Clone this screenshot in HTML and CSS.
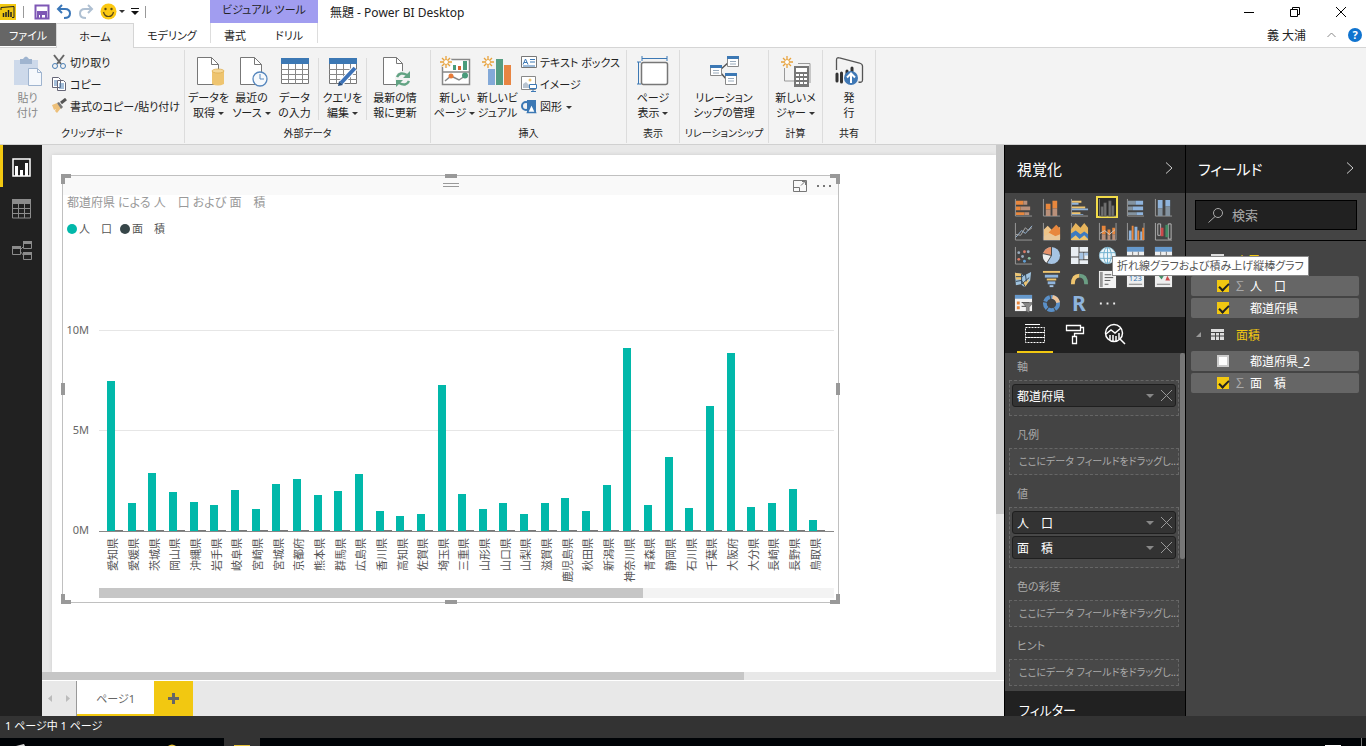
FILE: index.html
```html
<!DOCTYPE html>
<html lang="ja">
<head>
    <meta charset="UTF-8">
    <meta name="viewport" content="width=device-width, initial-scale=1.0">
    <title>無題 - Power BI Desktop</title>
    <link rel="stylesheet" href="styles.css">
</head>
<body>
    <header class="titlebar">
        <div class="quick-access">
            <svg class="logo" width="16" height="16" viewBox="0 0 16 16"><rect width="16" height="16" fill="#f2c811"/><path d="M1 6V3.500l13-1v11h-2" fill="none" stroke="#222"/><path d="M3.500 9v4M6 8v5M8.500 6v7M11 8v5" stroke="#222" stroke-width="1.500"/></svg>
            <span class="divider"></span>
            <button aria-label="保存"><svg width="16" height="16" viewBox="0 0 16 16"><path d="M1.500 1.500h13v13h-13z" fill="#fff" stroke="#7e57b5" stroke-width="2"/><path d="M3 8h10M4 14V10h8v4" stroke="#7e57b5" stroke-width="2" fill="none"/><path d="M6 11h2v3H6z" fill="#7e57b5"/></svg></button>
            <button aria-label="元に戻す"><svg width="16" height="16" viewBox="0 0 16 16"><path d="M6 1L2 5l4 4M2.500 5H9q5 0 5 4.500T8 14" fill="none" stroke="#3a76b8" stroke-width="2"/></svg></button>
            <button aria-label="やり直し"><svg width="16" height="16" viewBox="0 0 16 16"><path d="M10 1l4 4-4 4M13.500 5H7Q2 5 2 9.500T8 14" fill="none" stroke="#afc0d2" stroke-width="2"/></svg></button>
            <button class="smile" aria-label="フィードバック"><svg width="17" height="17" viewBox="0 0 17 17"><circle cx="8.500" cy="8.500" r="8" fill="#fcc912"/><circle cx="5.500" cy="6" r="1.200" fill="#5b4a16"/><circle cx="11.500" cy="6" r="1.200" fill="#5b4a16"/><path d="M3.500 9q1 4.500 5 4.500t5-4.500" fill="none" stroke="#5b4a16" stroke-width="1.200"/></svg><i class="caret"></i></button>
            <button class="customize" aria-label="カスタマイズ"><svg width="8" height="8" viewBox="0 0 8 8"><path d="M0 .500h8" stroke="#111"/><path d="M0 3h8L4 7z" fill="#111"/></svg></button>
            <span class="divider"></span>
        </div>
        <div class="context-title">ビジュアル ツール</div>
        <h1>無題 - Power BI Desktop</h1>
        <div class="window-buttons">
            <button aria-label="最小化"><svg width="12" height="12" viewBox="0 0 12 12"><path d="M1 6.500h10" stroke="#000"/></svg></button>
            <button aria-label="元に戻す (縮小)"><svg width="12" height="12" viewBox="0 0 12 12"><path d="M1.500 3.500h7v7h-7zM3.500 3.500v-2h7v7h-2" fill="none" stroke="#000"/></svg></button>
            <button aria-label="閉じる"><svg width="12" height="12" viewBox="0 0 12 12"><path d="M1 1l10 10M11 1L1 11" stroke="#000"/></svg></button>
        </div>
    </header>

    <nav class="tabs">
        <button class="tab file">ファイル</button>
        <button class="tab home">ホーム</button>
        <button class="tab modeling">モデリング</button>
        <div class="context-tabs">
            <button class="tab">書式</button>
            <button class="tab">ドリル</button>
        </div>
        <div class="account">
            <span>義 大浦</span>
            <button aria-label="リボンを折りたたむ"><svg width="9" height="6" viewBox="0 0 9 6"><path d="M.500 5l4-4 4 4" fill="none" stroke="#888"/></svg></button>
            <button class="help" aria-label="ヘルプ">?</button>
        </div>
    </nav>

    <section class="ribbon">
        <div class="group clipboard">
            <div class="group-items">
                <button class="big disabled">
                    <svg width="32" height="32" viewBox="0 0 32 32"><path d="M2 4h24v25H2z" fill="#cdd9ea"/><path d="M8 3h3q3-5 6 0h3v5H8z" fill="#9fb4cf"/><path d="M16.500 12.500h9l4 4v13h-13z" fill="#f5f8fc" stroke="#9fb4cf"/><path d="M25.500 12.500v4h4" fill="none" stroke="#9fb4cf"/></svg>
                    <span>貼り<br>付け</span>
                </button>
                <div class="stack">
                    <button><svg width="16" height="16" viewBox="0 0 16 16"><path d="M3 1l7 9M13 1L6 10" stroke="#666" stroke-width="2"/><circle cx="4" cy="12" r="2.500" fill="none" stroke="#4a7fb5"/><circle cx="12" cy="12" r="2.500" fill="none" stroke="#4a7fb5"/></svg>切り取り</button>
                    <button><svg width="16" height="16" viewBox="0 0 16 16"><path d="M1.500 1.500h6l2 2v8h-8zM6.500 4.500h6l2 2v8h-8z" fill="#fff" stroke="#667"/><path d="M3 5h3M3 7h3M3 9h3M8 8h5M8 10h5M8 12h5" stroke="#4a7fb5"/></svg>コピー</button>
                    <button><svg width="16" height="16" viewBox="0 0 16 16"><path d="M1 7l5-2 4 5-4 5-2-2 1-2-2 1z" fill="#edc07a"/><path d="M6 5l2-1 4 5-2 2z" fill="#777"/><path d="M10 5l5-4" stroke="#555" stroke-width="3"/></svg>書式のコピー/貼り付け</button>
                </div>
            </div>
            <div class="group-name">クリップボード</div>
        </div>

        <div class="group external">
            <div class="group-items">
                <button class="big">
                    <svg width="32" height="32" viewBox="0 0 32 32"><path d="M4.500 1.500h14l7 7v20h-21z" fill="#fff" stroke="#777"/><path d="M18.500 1.500v7h7" fill="none" stroke="#777"/><path d="M19 15v13q6 3 12 0V15z" fill="#eec46f"/><ellipse cx="25" cy="15" rx="6" ry="2" fill="#f5d797" stroke="#dba947" stroke-width=".7"/></svg>
                    <span>データを<br>取得<i class="caret"></i></span>
                </button>
                <button class="big">
                    <svg width="32" height="32" viewBox="0 0 32 32"><path d="M4.500 1.500h14l7 7v20h-21z" fill="#fff" stroke="#777"/><path d="M18.500 1.500v7h7" fill="none" stroke="#777"/><circle cx="24" cy="23" r="7" fill="#f6f9fc" stroke="#5586bd" stroke-width="1.300"/><path d="M24 18v5h4" fill="none" stroke="#5586bd"/></svg>
                    <span>最近の<br>ソース<i class="caret"></i></span>
                </button>
                <button class="big">
                    <svg width="32" height="32" viewBox="0 0 32 32"><path d="M2.500 3.500h27v24h-27z" fill="#fff" stroke="#777"/><path d="M2 2h28v6H2z" fill="#3c78b4"/><path d="M2 13.500h28M2 18.500h28M2 23.500h28M9.500 8v20M16.500 8v20M23.500 8v20" stroke="#888"/></svg>
                    <span>データ<br>の入力</span>
                </button>
                <i class="rule"></i>
                <button class="big">
                    <svg width="32" height="32" viewBox="0 0 32 32"><path d="M2.500 3.500h27v24h-27z" fill="#fff" stroke="#777"/><path d="M2 2h28v6H2z" fill="#3c78b4"/><path d="M2 13.500h28M2 18.500h28M2 23.500h28M9.500 8v20M16.500 8v20M23.500 8v20" stroke="#888"/><path d="M14 27L28 12" stroke="#fff" stroke-width="6"/><path d="M14 27L28 12" stroke="#3c72b8" stroke-width="4"/><path d="M11 30l1-5 4 4z" fill="#274e80"/></svg>
                    <span>クエリを<br>編集<i class="caret"></i></span>
                </button>
                <i class="rule"></i>
                <button class="big wide">
                    <svg width="32" height="32" viewBox="0 0 32 32"><path d="M4.500 1.500h13l6 6v21h-19z" fill="#fff" stroke="#777"/><path d="M17.500 1.500v6h6" fill="none" stroke="#777"/><circle cx="24" cy="23" r="8" fill="#f3f3f3"/><path d="M18 21q3-6 10-2M30 25q-3 6-10 2" fill="none" stroke="#62a383" stroke-width="2.500"/><path d="M31 15v7h-7zM17 31v-7h7z" fill="#62a383"/></svg>
                    <span>最新の情<br>報に更新</span>
                </button>
            </div>
            <div class="group-name">外部データ</div>
        </div>

        <div class="group insert">
            <div class="group-items">
                <button class="big">
                    <svg width="32" height="32" viewBox="0 0 32 32"><path d="M3.500 3.500h27v25h-27zM3.500 16h27" fill="#fff" stroke="#888" stroke-width="1.500"/><path d="M14 9h3v5h-3z" fill="#4a9b7b"/><path d="M19 10h3v4h-3z" fill="#d9642f"/><path d="M24 5h4v9h-4z" fill="#4a9b7b"/><path d="M6 25l6-5 8 4 6-4" fill="none" stroke="#888" stroke-width="1.500"/><circle cx="12" cy="20" r="2.500" fill="#e87b38"/><circle cx="26" cy="19.500" r="3" fill="#4a9b7b"/><circle cx="7" cy="6" r="6" fill="#f3f3f3"/><path d="M7 0v3M7 9v3M1 6h3M10 6h3M3 2l2 2M9 8l2 2M11 2L9 4M5 8l-2 2" stroke="#e8a33d" stroke-width="1.300"/><circle cx="7" cy="6" r="2.500" fill="#fff" stroke="#e8a33d"/></svg>
                    <span>新しい<br>ページ<i class="caret"></i></span>
                </button>
                <button class="big">
                    <svg width="32" height="32" viewBox="0 0 32 32"><path d="M6 13h7v16H6z" fill="#83a9d8"/><path d="M14 3h7v26h-7z" fill="#559d82"/><path d="M22 9h7v20h-7z" fill="#e88542"/><path d="M6 0v3M6 9v3M0 6h3M9 6h3M2 2l2 2M8 8l2 2M10 2L8 4M4 8l-2 2" stroke="#e8a33d" stroke-width="1.300"/><circle cx="6" cy="6" r="2.500" fill="#fff" stroke="#e8a33d"/></svg>
                    <span>新しいビ<br>ジュアル</span>
                </button>
                <div class="stack">
                    <button><svg width="16" height="16" viewBox="0 0 16 16"><path d="M.500 2.500h15v11H.500z" fill="#fff" stroke="#777"/><path d="M2 10.500L4.500 5 7 10.500M3 8.500h3M9 5.500h5M9 8h5M2 12h12" fill="none" stroke="#3c78b4"/></svg>テキスト ボックス</button>
                    <button><svg width="16" height="16" viewBox="0 0 16 16"><path d="M.500.500h14v13H.500z" fill="#fff" stroke="#888"/><circle cx="9" cy="4" r="1.500" fill="#eec46f"/><path d="M2 12V8l3-2 3 3v3z" fill="#b9c4d0"/><path d="M8.500 8.500h7v4h-7zM12 13v2M10 15.500h5" fill="#fff" stroke="#3c78b4"/></svg>イメージ</button>
                    <button><svg width="16" height="16" viewBox="0 0 16 16"><circle cx="5" cy="8" r="4" fill="none" stroke="#3c78b4" stroke-width="2"/><path d="M6 2h9v12H6z" fill="#3c78b4"/><path d="M10.500 6l4 8.500h-8z" fill="#fff" stroke="#3c78b4" stroke-width="1.500"/></svg><span>図形<i class="caret"></i></span></button>
                </div>
            </div>
            <div class="group-name">挿入</div>
        </div>

        <div class="group view">
            <div class="group-items">
                <button class="big">
                    <svg width="32" height="32" viewBox="0 0 32 32"><rect x="4.500" y="6.500" width="26" height="22" rx="2" fill="#fff" stroke="#777" stroke-width="1.500"/><path d="M5 2.500h25M5 0v5M30 0v5M1.500 6v22M0 6h4M0 28h4" stroke="#3c78b4"/></svg>
                    <span>ページ<br>表示<i class="caret"></i></span>
                </button>
            </div>
            <div class="group-name">表示</div>
        </div>

        <div class="group relation">
            <div class="group-items">
                <button class="big full">
                    <svg width="32" height="32" viewBox="0 0 32 32"><path d="M12 14l9-8M12 16l7 8" stroke="#555" stroke-width="1.500"/><path d="M2.500 10.500h11v9h-11zM19.500 1.500h11v9h-11zM17.500 18.500h11v10h-11z" fill="#fff" stroke="#888"/><path d="M2 9h12v3H2zM19 0h12v3H19zM17 17h12v3H17z" fill="#3c78b4"/><path d="M5 14.500h6M5 17h6M22 5.500h6M22 8h6M20 22.500h6M20 25h6" stroke="#9ab"/></svg>
                    <span>リレーション<br>シップの管理</span>
                </button>
            </div>
            <div class="group-name">リレーションシップ</div>
        </div>

        <div class="group calc">
            <div class="group-items">
                <button class="big">
                    <svg width="32" height="32" viewBox="0 0 32 32"><path d="M4.500 12v13H14M18 7.500h12V27" fill="none" stroke="#999"/><path d="M14 10h15v21H14z" fill="#777"/><path d="M16 12h11v4H16z" fill="#fff"/><path d="M16 19h3M20 19h3M24 19h3M16 23h3M20 23h3M24 23h3M16 27h3M20 27h3M24 27h3" stroke="#fff" stroke-width="2"/><path d="M7 0v3M7 9v3M1 6h3M10 6h3M3 2l2 2M9 8l2 2M11 2L9 4M5 8l-2 2" stroke="#e8a33d" stroke-width="1.300"/><circle cx="7" cy="6" r="2.500" fill="#fff" stroke="#e8a33d"/></svg>
                    <span>新しいメ<br>ジャー<i class="caret"></i></span>
                </button>
            </div>
            <div class="group-name">計算</div>
        </div>

        <div class="group share">
            <div class="group-items">
                <button class="big">
                    <svg width="32" height="32" viewBox="0 0 32 32"><path d="M3.500 14V4q0-3 3-2l20 5q3 1 3 3v14q0 3-4 2" fill="none" stroke="#555" stroke-width="1.300"/><path d="M4 18v7M8.500 17v9M14 15v5M19 12v3" stroke="#333" stroke-width="3" stroke-linecap="round"/><circle cx="18" cy="22" r="7" fill="#3f78b5"/><path d="M18 27v-9M14 21.500l4-4 4 4" fill="none" stroke="#fff" stroke-width="2"/></svg>
                    <span>発<br>行</span>
                </button>
            </div>
            <div class="group-name">共有</div>
        </div>
    </section>

    <main class="workspace">
        <nav class="view-nav">
            <button class="active" aria-label="レポート"><svg width="19" height="19" viewBox="0 0 19 19"><path d="M1 1h17v17H1z" fill="none" stroke="#fff" stroke-width="1.500"/><path d="M4.500 18V8M9.500 18v-6M14.500 18V5" stroke="#fff" stroke-width="3"/></svg></button>
            <button aria-label="データ"><svg width="19" height="20" viewBox="0 0 19 20"><path d="M0 0h19v5H0z" fill="#8c8c8c"/><path d="M.500 4v15h18V4M0 9.500h19M0 14.500h19M6.500 4v15M12.500 4v15" fill="none" stroke="#8c8c8c"/></svg></button>
            <button aria-label="リレーションシップ"><svg width="20" height="20" viewBox="0 0 20 20"><path d="M.500 6.500h8v7h-8zM11.500 1.500h8v6h-8zM11.500 12.500h8v6h-8zM8 9l4-4M8 10l4 5" fill="none" stroke="#8c8c8c"/><path d="M0 5h9v3H0zM11 0h9v3h-9zM11 11h9v3h-9z" fill="#8c8c8c"/></svg></button>
        </nav>

        <section class="report">
            <div class="canvas-area">
                <div class="page">
                    <article class="visual">
                        <i class="handle corner tl"></i><i class="handle corner tr"></i><i class="handle corner bl"></i><i class="handle corner br"></i>
                        <i class="handle side top"></i><i class="handle side bottom"></i><i class="handle side left"></i><i class="handle side right"></i>
                        <div class="visual-bar">
                            <i class="grip"></i>
                            <button aria-label="フォーカス モード"><svg width="14" height="12" viewBox="0 0 14 12"><path d="M.500.500h13v11H.500zM.500 7.500h6v4M8 5.500l4-4M9 1.500h3.500V5" fill="none" stroke="#777"/></svg></button>
                            <button aria-label="その他のオプション"><svg width="14" height="4" viewBox="0 0 14 4"><path d="M0 1h2v2H0zM6 1h2v2H6zM12 1h2v2h-2z" fill="#777"/></svg></button>
                        </div>
                        <h2>都道府県 による 人　口 および 面　積</h2>
                        <div class="legend">
                            <span><i class="dot people"></i>人　口</span>
                            <span><i class="dot area"></i>面　積</span>
                        </div>
                        <div class="chart">
                            <div class="y-axis"><span>10M</span><span>5M</span><span>0M</span></div>
                            <div class="chart-body">
                                <div class="plot" id="plot"></div>
                                <div class="x-axis" id="xAxis"></div>
                                <div class="chart-scroll"><i></i></div>
                            </div>
                        </div>
                    </article>
                </div>
                <div class="scroll-y"><i></i></div>
            </div>
            <div class="scroll-x"><i></i></div>
            <div class="page-tabs">
                <div class="page-arrows">
                    <button aria-label="前のページ"><svg width="4" height="7" viewBox="0 0 4 7"><path d="M4 0v7L0 3.500z" fill="#bbb"/></svg></button>
                    <button aria-label="次のページ"><svg width="4" height="7" viewBox="0 0 4 7"><path d="M0 0v7l4-3.500z" fill="#bbb"/></svg></button>
                </div>
                <button class="page-tab">ページ1</button>
                <button class="add-page" aria-label="新しいページ"><svg width="11" height="11" viewBox="0 0 11 11"><path d="M5.500 0v11M0 5.500h11" stroke="#666" stroke-width="3"/></svg></button>
            </div>
        </section>

        <aside class="pane viz-pane">
            <header>
                <h2>視覚化</h2>
                <button aria-label="折りたたむ"><svg width="8" height="12" viewBox="0 0 8 12"><path d="M1 .500L7 6l-6 5.500" fill="none" stroke="#ccc"/></svg></button>
            </header>
            <div class="viz-grid">
                <button aria-label="積み上げ横棒"><svg viewBox="0 0 20 20"><path d="M1.500 1v18H19" fill="none" stroke="#999"/><path d="M2 3h8v4H2zM2 9h5v4H2zM2 15h9v3H2z" fill="#e8873d"/><path d="M10 3h4v4h-4zM7 9h10v4H7zM11 15h5v3h-5z" fill="#b9907a"/></svg></button>
                <button aria-label="積み上げ縦棒"><svg viewBox="0 0 20 20"><path d="M1.500 1v18H19" fill="none" stroke="#999"/><path d="M4 6h5v6H4zM11 3h5v8h-5z" fill="#e8873d"/><path d="M4 12h5v7H4zM11 11h5v8h-5z" fill="#b9907a"/></svg></button>
                <button aria-label="集合横棒"><svg viewBox="0 0 20 20"><path d="M1.500 1v18H19" fill="none" stroke="#999"/><path d="M2 3h10v2H2zM2 9h14v2H2zM2 15h9v2H2z" fill="#eec46f"/><path d="M2 5h7v2H2zM2 11h17v2H2zM2 17h12v1H2z" fill="#8fb4dd"/></svg></button>
                <button class="selected" aria-label="集合縦棒"><svg viewBox="0 0 20 20"><path d="M1.500 1v18H19" fill="none" stroke="#777"/><path d="M3 9h3v10H3zM6 5h3v14H6zM11 3h3v16h-3zM14 8h3v11h-3z" fill="#707070" stroke="#444" stroke-width=".5"/></svg></button>
                <button aria-label="100% 横棒"><svg viewBox="0 0 20 20"><path d="M1.500 1v18H19" fill="none" stroke="#999"/><path d="M2 3h8v4H2zM2 9h5v4H2zM2 15h9v3H2z" fill="#83929f"/><path d="M10 3h8v4h-8zM7 9h11v4H7zM11 15h7v3h-7z" fill="#8fb4dd"/></svg></button>
                <button aria-label="100% 縦棒"><svg viewBox="0 0 20 20"><path d="M1.500 1v18H19" fill="none" stroke="#999"/><path d="M4 2h5v9H4zM12 2h5v7h-5z" fill="#8fb4dd"/><path d="M4 11h5v8H4zM12 9h5v10h-5z" fill="#83929f"/></svg></button>

                <button aria-label="折れ線"><svg viewBox="0 0 20 20"><path d="M1.500 1v18H19" fill="none" stroke="#999"/><path d="M2 16l6-7 4 3 7-8" fill="none" stroke="#9bb8d8"/><path d="M2 13l5 1 5-8 3 3 4-3" fill="none" stroke="#aaa"/></svg></button>
                <button aria-label="面"><svg viewBox="0 0 20 20"><path d="M1.500 1v18H19" fill="none" stroke="#999"/><path d="M2 8l4-4 7 7 6-6v13H2z" fill="#eec488"/><path d="M7 11l8-8 4 4v11z" fill="#e8873d"/><path d="M2 15l6-3 6 3 5-2v6H2z" fill="#e9c798"/></svg></button>
                <button aria-label="積み上げ面"><svg viewBox="0 0 20 20"><path d="M1.500 1v18H19" fill="none" stroke="#999"/><path d="M1 8l5-7 5 5 4-5 4 5v12H1z" fill="#e8b55c"/><path d="M1 12l5-3 5 4 4-3 4 3v6H1z" fill="#3d7ac0"/><path d="M1 18l5-4 4 4 5-4 4 4v1H1z" fill="#eec46f"/></svg></button>
                <button aria-label="折れ線および積み上げ縦棒"><svg viewBox="0 0 20 20"><path d="M1.500 1v18H19V1" fill="none" stroke="#999"/><path d="M4 4h4v9H4zM10 8h3v6h-3zM15 6h3v7h-3z" fill="#e8873d"/><path d="M4 13h4v6H4zM10 14h3v5h-3zM15 13h3v6h-3z" fill="#b9907a"/><path d="M2 12l5-3 5 4 6-5" fill="none" stroke="#ccc"/></svg></button>
                <button aria-label="折れ線および集合縦棒"><svg viewBox="0 0 20 20"><path d="M1.500 1v18H19V1" fill="none" stroke="#999"/><path d="M3 9h3v10H3zM9 5h3v14H9zM15 10h2v9h-2z" fill="#8fb4dd"/><path d="M6 4h2v15H6zM12 9h2v10h-2zM17 6h2v13h-2z" fill="#e8873d"/></svg></button>
                <button aria-label="ウォーターフォール"><svg viewBox="0 0 20 20"><path d="M1.500 1v18H19" fill="none" stroke="#aaa"/><path d="M4 2h3v12H4zM15 2h3v16h-3z" fill="none" stroke="#bbb"/><path d="M7 6h3v9H7z" fill="#ca4a4a"/><path d="M12 3h3v13h-3z" fill="#438c65"/></svg></button>

                <button aria-label="散布図"><svg viewBox="0 0 20 20"><path d="M1.500 1v18H19" fill="none" stroke="#999"/><g fill="#9aabbc"><circle cx="5" cy="7" r="1.500"/><circle cx="15" cy="6" r="1.500"/><circle cx="9" cy="11" r="1.500"/></g><g fill="#dd7c67"><circle cx="5" cy="14" r="1.500"/><circle cx="11" cy="6" r="1.500"/></g><circle cx="16" cy="13" r="1.500" fill="#8ab99f"/><circle cx="11" cy="16" r="1.500" fill="#62a0d6"/></svg></button>
                <button aria-label="円"><svg viewBox="0 0 20 20"><circle cx="10" cy="10" r="9" fill="#a6c4e4"/><path d="M10 10V1q-6 0-9 7z" fill="#e7926a"/><path d="M10 10L1 8q-1 6 4 10z" fill="#eee"/><path d="M10 1v9L1 8M10 10l-5 8" fill="none" stroke="#444"/></svg></button>
                <button aria-label="ツリーマップ"><svg viewBox="0 0 20 20"><path d="M1 1h8v10H1zM10 1h9v5h-9zM10 7h4v7h-4zM15 7h4v7h-4zM1 12h8v7H1zM10 15h9v4h-9z" fill="#e9eef3"/><path d="M10 7h4v7h-4zM15 7h4v3h-4z" fill="#a6c4e4"/></svg></button>
                <button aria-label="マップ"><svg viewBox="0 0 20 20"><circle cx="10" cy="10" r="8.500" fill="#eef6fa" stroke="#9cc8dc"/><ellipse cx="10" cy="10" rx="4" ry="8.500" fill="none" stroke="#6fb0cf"/><path d="M2 7h16M2 13h16M10 2v16" stroke="#6fb0cf"/></svg></button>
                <button aria-label="テーブル"><svg viewBox="0 0 20 20"><path d="M1 1h18v18H1z" fill="#eee"/><path d="M1 1h18v5H1z" fill="#6699cc"/><path d="M1 10h18M1 14h18M7 6v13M13 6v13" stroke="#777"/></svg></button>
                <button aria-label="マトリックス"><svg viewBox="0 0 20 20"><path d="M1 1h18v18H1z" fill="#eee"/><path d="M1 1h18v5H1z" fill="#6699cc"/><path d="M1 10h18M1 14h18M7 6v13M13 6v13" stroke="#777"/></svg></button>

                <button aria-label="塗り分け地図"><svg viewBox="0 0 20 20"><path d="M1 3l7 1 2 2 8-4-1 9-6 7-4-3-5 1z" fill="#9fc3df"/><path d="M1 3l7 1v6H2zM9 13l7-3-4 8z" fill="#eec46f"/><path d="M2 7h7l3-3 1 8M2 12l6-1 4 7M8 4v11l8-7" fill="none" stroke="#345"/></svg></button>
                <button aria-label="じょうご"><svg viewBox="0 0 20 20"><path d="M1 1h18v2H1z" fill="#eec46f"/><path d="M3 5h14v3H3z" fill="#8fb4dd"/><path d="M5 9h10v2H5z" fill="#eec46f"/><path d="M6 12h8v3H6z" fill="#8fb4dd"/><path d="M8 16h4v2H8z" fill="#a6c4e4"/></svg></button>
                <button aria-label="ゲージ"><svg viewBox="0 0 20 20"><path d="M3 15q0-9 7-9" fill="none" stroke="#eec46f" stroke-width="4"/><path d="M10 6q7 0 7 9" fill="none" stroke="#6b9e84" stroke-width="4"/></svg></button>
                <button aria-label="カード"><svg viewBox="0 0 20 20"><path d="M1 1h18v18H1z" fill="#f2f2f2"/><path d="M2 2h3v16H2z" fill="#999"/><path d="M7 5h7M7 8h9M7 11h6M7 15h4" stroke="#555"/></svg></button>
                <button aria-label="複数の行のカード"><svg viewBox="0 0 20 20"><path d="M1 1h18v17H1z" fill="#eee"/><path d="M3 15h14" stroke="#777"/><text x="3" y="12" font-size="8" fill="#3c78b4">123</text></svg></button>
                <button aria-label="KPI"><svg viewBox="0 0 20 20"><path d="M1 1h18v17H1z" fill="#eee"/><path d="M4 5h7l-3 5z" fill="#438c65"/><path d="M12 11h5l-3-5z" fill="#ca4a4a"/><path d="M3 15h14" stroke="#777"/></svg></button>

                <button aria-label="スライサー"><svg viewBox="0 0 20 20"><path d="M1 1h18v17H1z" fill="#f2f2f2"/><path d="M1 1h18v4H1z" fill="#6699cc"/><path d="M3 8h3v3H3zM3 13h3v3H3z" fill="#e8873d"/><path d="M8 9h8M8 13h5" stroke="#444"/><path d="M9 9h11l-4 5v6l-3-2v-4z" fill="#888" stroke="#444" stroke-width=".5"/></svg></button>
                <button aria-label="ドーナツ"><svg viewBox="0 0 20 20"><circle cx="10" cy="10" r="7" fill="none" stroke="#5a90c8" stroke-width="4" stroke-dasharray="7 1"/><path d="M11 3q5 1 6 6" fill="none" stroke="#eec49a" stroke-width="4"/></svg></button>
                <button class="r-script" aria-label="R スクリプト">R</button>
                <button aria-label="その他"><svg viewBox="0 0 20 20"><path d="M2 9h2v2H2zM9 9h2v2H9zM16 9h2v2h-2z" fill="#eee"/></svg></button>
            </div>
            <div class="pane-tabs">
                <button class="active" aria-label="フィールド"><svg width="22" height="22" viewBox="0 0 22 22"><path d="M1 1.500h15" stroke="#fff"/><path d="M1.500 4.500h19v5h-19zM1.500 9.500h19v5h-19zM1.500 14.500h19v5h-19z" fill="none" stroke="#fff" stroke-dasharray="2 1"/></svg></button>
                <button aria-label="書式"><svg width="20" height="22" viewBox="0 0 20 22"><path d="M1.500 2.500h14v5h-14zM15.500 4.500h3v6h-9v3M7.500 13.500h4v7h-4z" fill="none" stroke="#fff" stroke-width="1.300"/></svg></button>
                <button aria-label="分析"><svg width="22" height="22" viewBox="0 0 22 22"><circle cx="10" cy="10" r="8.500" fill="none" stroke="#fff" stroke-width="1.500"/><path d="M2 11l5-4 4 3 6-5M6 17v-5M9 18v-6M12 18v-5M15 16v-6M16 16l5 5" fill="none" stroke="#fff" stroke-width="1.500"/></svg></button>
            </div>
            <div class="wells">
                <div class="well-list">
                    <h3>軸</h3>
                    <div class="well">
                        <div class="pill"><span>都道府県</span><button class="caret" aria-label="メニュー"></button><button class="remove" aria-label="削除"></button></div>
                    </div>
                    <h3>凡例</h3>
                    <div class="well empty">ここにデータ フィールドをドラッグし...</div>
                    <h3>値</h3>
                    <div class="well">
                        <div class="pill"><span>人　口</span><button class="caret" aria-label="メニュー"></button><button class="remove" aria-label="削除"></button></div>
                        <div class="pill"><span>面　積</span><button class="caret" aria-label="メニュー"></button><button class="remove" aria-label="削除"></button></div>
                    </div>
                    <h3>色の彩度</h3>
                    <div class="well empty">ここにデータ フィールドをドラッグし...</div>
                    <h3>ヒント</h3>
                    <div class="well empty">ここにデータ フィールドをドラッグし...</div>
                </div>
                <div class="wells-scroll"><i></i></div>
            </div>
            <div class="filter-head">フィルター</div>
            <div class="tooltip">折れ線グラフおよび積み上げ縦棒グラフ</div>
        </aside>

        <aside class="pane fields-pane">
            <header>
                <h2>フィールド</h2>
                <button aria-label="折りたたむ"><svg width="8" height="12" viewBox="0 0 8 12"><path d="M1 .500L7 6l-6 5.500" fill="none" stroke="#ccc"/></svg></button>
            </header>
            <div class="search">
                <label for="fieldSearch"><svg width="16" height="16" viewBox="0 0 16 16"><circle cx="10" cy="6" r="4.500" fill="none" stroke="#aaa"/><path d="M7 9.500L.500 15.500" stroke="#aaa"/></svg></label>
                <input type="text" id="fieldSearch" placeholder="検索" aria-label="検索">
            </div>
            <div class="field-list">
                <div class="table-row">
                    <i class="expander"></i>
                    <svg width="13" height="11" viewBox="0 0 13 11"><path d="M0 0h13v11H0z" fill="#ddd"/><path d="M0 3.500h13M0 7h13M4.500 3v8M8.500 3v8" stroke="#444"/></svg>
                    <span>人口</span>
                </div>
                <label class="field"><input type="checkbox" checked><i class="sigma">∑</i><span>人　口</span></label>
                <label class="field"><input type="checkbox" checked><i class="sigma"></i><span>都道府県</span></label>
                <div class="table-row">
                    <i class="expander"></i>
                    <svg width="13" height="11" viewBox="0 0 13 11"><path d="M0 0h13v11H0z" fill="#ddd"/><path d="M0 3.500h13M0 7h13M4.500 3v8M8.500 3v8" stroke="#444"/></svg>
                    <span>面積</span>
                </div>
                <label class="field"><input type="checkbox"><i class="sigma"></i><span>都道府県_2</span></label>
                <label class="field"><input type="checkbox" checked><i class="sigma">∑</i><span>面　積</span></label>
            </div>
        </aside>
    </main>

    <footer class="status">1 ページ中 1 ページ</footer>
    <div class="taskbar">
        <svg width="340" height="8" viewBox="0 0 340 8"><path d="M16 8l8-2 1 2z" fill="#ddd"/><path d="M168 8q4-3 8 0z" fill="#e8c33a"/><path d="M224 0h36v8h-36z" fill="#333"/><path d="M234 7h16v1h-16z" fill="#e8c33a"/></svg>
        <svg width="44" height="8" viewBox="0 0 44 8"><path d="M3 7h16v1H3z" fill="#fff"/><path d="M39.500 0v8" stroke="#777"/></svg>
    </div>

    <script src="script.js"></script>
</body>
</html>
```
FILE: styles.css
```css
* {
    margin: 0;
    padding: 0;
    box-sizing: border-box;
}

body {
    height: 100vh;
    display: flex;
    flex-direction: column;
    overflow: hidden;
    font-family: "Noto Sans", "Noto Sans CJK JP", sans-serif;
    font-feature-settings: "palt";
    font-size: 11px;
    color: #222;
    background: #fff;
}

button {
    border: none;
    background: none;
    font: inherit;
    font-feature-settings: inherit;
    color: inherit;
    cursor: pointer;
}

svg {
    display: block;
    flex: none;
}

h1, h2, h3 {
    font-weight: 400;
}

.caret {
    display: inline-block;
    border: 3px solid transparent;
    border-top-color: #333;
    border-bottom: none;
    margin-left: 4px;
    vertical-align: 2px;
}

/* title bar */
.titlebar {
    display: flex;
    align-items: center;
    height: 23px;
    flex: none;
}

.quick-access {
    width: 210px;
    display: flex;
    align-items: center;
    gap: 6px;
}

.quick-access .divider {
    width: 1px;
    height: 12px;
    background: #999;
}

.quick-access .divider:nth-of-type(1) {
    margin: 0 4px 0 1px;
}

.smile {
    display: flex;
    align-items: center;
}

.smile .caret {
    margin-left: 2px;
}

.context-title {
    width: 108px;
    height: 23px;
    line-height: 20px;
    text-align: center;
    background: #a19df0;
}

h1 {
    margin-left: 12px;
    font-size: 12px;
}

.window-buttons {
    margin-left: auto;
    display: flex;
    padding-right: 2px;
}

.window-buttons button {
    width: 46px;
    display: flex;
    justify-content: center;
}

/* ribbon tabs */
.tabs {
    display: flex;
    height: 25px;
    flex: none;
    border-bottom: 1px solid #d5d5d5;
}

.tab {
    text-align: center;
}

.tab.file {
    width: 56px;
    height: 23px;
    background: #666;
    color: #fff;
}

.tab.home {
    width: 78px;
    height: 25px;
    background: #f3f3f3;
    border: 1px solid #d5d5d5;
    border-bottom: none;
}

.tab.modeling {
    width: 76px;
}

.context-tabs {
    width: 108px;
    height: 20px;
    padding: 4px 14px 0 13px;
    display: flex;
    align-items: center;
    justify-content: space-between;
    border: solid #ddd;
    border-width: 0 1px;
}

.account {
    margin-left: auto;
    padding-right: 4px;
    display: flex;
    align-items: center;
    gap: 12px;
    font-size: 12px;
}

.account button:first-of-type {
    margin-left: 9px;
}

.help {
    width: 14px;
    height: 14px;
    border-radius: 50%;
    background: #0f73cf;
    color: #fff;
    font-weight: 700;
    font-size: 11px;
    line-height: 14px;
}

/* ribbon */
.ribbon {
    display: flex;
    height: 97px;
    flex: none;
    padding: 2px 0 1px;
    background: #f3f3f3;
    border-bottom: 1px solid #d0d0d0;
}

.group {
    display: flex;
    flex-direction: column;
    flex: none;
    border-right: 1px solid #dcdcdc;
}

.group.clipboard { width: 185px; }
.group.external { width: 246px; }
.group.insert { width: 196px; }
.group.view { width: 53px; }
.group.relation { width: 89px; }
.group.calc { width: 54px; }
.group.share { width: 53px; }

.group-items {
    flex: 1;
    display: flex;
    justify-content: center;
}

.external .group-items {
    justify-content: flex-start;
    padding-left: 2px;
}

.insert .group-items {
    justify-content: flex-start;
    padding-left: 2px;
}

.clipboard .group-items {
    justify-content: flex-start;
    padding-left: 6px;
}

.group-name {
    height: 20px;
    font-size: 10px;
    line-height: 20px;
    text-align: center;
    white-space: nowrap;
}

.big {
    width: 43px;
    padding-top: 6px;
    display: flex;
    flex-direction: column;
    align-items: center;
    justify-content: flex-start;
    line-height: 15px;
    white-space: nowrap;
}

.big.wide {
    width: 52px;
}

.big.full {
    width: 88px;
}

.big span {
    padding-top: 2px;
}

.big .caret {
    margin-left: 3px;
}

.big.disabled {
    color: #888;
}

.rule {
    width: 1px;
    height: 62px;
    margin: 8px 2px 0;
    background: #dcdcdc;
}

.stack {
    display: flex;
    flex-direction: column;
    padding-top: 1px;
    margin-left: 2px;
}

.stack button {
    height: 22px;
    display: flex;
    align-items: center;
    gap: 3px;
    white-space: nowrap;
}

/* workspace */
.workspace {
    flex: 1;
    min-height: 0;
    display: flex;
}

.view-nav {
    width: 42px;
    flex: none;
    background: #212121;
}

.view-nav button {
    width: 42px;
    height: 42px;
    display: flex;
    align-items: center;
    justify-content: center;
    border-left: 3px solid transparent;
    padding: 2px 2px 0 0;
}

.view-nav .active {
    border-left-color: #f2c811;
}

.report {
    flex: 1;
    min-width: 0;
    display: flex;
    flex-direction: column;
    background: #e8e8e8;
}

.canvas-area {
    flex: 1;
    min-height: 0;
    display: flex;
}

.page {
    flex: 1;
    margin: 10px 0 0 10px;
    padding: 20px 157px 69px 10px;
    display: flex;
    background: #fff;
    box-shadow: 0 0 4px #ccc;
}

.scroll-y {
    width: 8px;
    z-index: 1;
    background: #e8e8e8;
}

.scroll-y i {
    display: block;
    height: 70%;
    background: #c8c8c8;
}

.scroll-x {
    height: 9px;
    z-index: 1;
    background: #e8e8e8;
    border-bottom: 1px solid #fff;
}

.scroll-x i {
    display: block;
    width: 73%;
    height: 8px;
    background: #c6c6c6;
}

.page-tabs {
    height: 35px;
    display: flex;
}

.page-arrows {
    width: 35px;
    padding: 0 6px;
    display: flex;
    align-items: center;
    justify-content: space-between;
    border-right: 1px solid #999;
}

.page-tab {
    width: 77px;
    background: #fff;
    border-bottom: 2px solid #f2c811;
    color: #666;
}

.add-page {
    width: 39px;
    display: flex;
    align-items: center;
    justify-content: center;
    background: #f2c811;
}

/* selected visual */
.visual {
    position: relative;
    flex: 1;
    display: flex;
    flex-direction: column;
    border: 1px solid #c0c0c0;
}

.handle {
    position: absolute;
    border: 0 solid #999;
}

.corner {
    width: 10px;
    height: 10px;
}

.tl { top: -2px; left: -2px; border-width: 4px 0 0 4px; }
.tr { top: -2px; right: -2px; border-width: 4px 4px 0 0; }
.bl { bottom: -2px; left: -2px; border-width: 0 0 4px 4px; }
.br { bottom: -2px; right: -2px; border-width: 0 4px 4px 0; }

.side {
    background: #999;
}

.side.top, .side.bottom {
    left: calc(50% - 6px);
    width: 12px;
    height: 4px;
}

.side.left, .side.right {
    top: calc(50% - 6px);
    width: 4px;
    height: 12px;
}

.side.top { top: -2px; }
.side.bottom { bottom: -2px; }
.side.left { left: -2px; }
.side.right { right: -2px; }

.visual-bar {
    height: 19px;
    padding: 0 7px 0 6px;
    display: flex;
    align-items: center;
    justify-content: flex-end;
    gap: 10px;
    background: #f9f9f9;
}

.grip {
    position: absolute;
    left: calc(50% - 8px);
    top: 7px;
    width: 16px;
    height: 4px;
    border: solid #999;
    border-width: 1px 0;
}

.visual h2 {
    padding-left: 4px;
    line-height: 16px;
    font-size: 12px;
    color: #999;
}

.legend {
    display: flex;
    gap: 8px;
    padding: 10px 0 0 4px;
    line-height: 16px;
    color: #555;
}

.legend span {
    display: flex;
    align-items: center;
    gap: 2px;
}

.dot {
    width: 10px;
    height: 10px;
    border-radius: 50%;
}

.dot.people { background: #01b8aa; }
.dot.area { background: #374649; }

.chart {
    flex: 1;
    display: flex;
    padding: 93px 4px 4px 0;
}

.y-axis {
    width: 36px;
    height: 216px;
    padding-right: 10px;
    display: flex;
    flex-direction: column;
    justify-content: space-between;
    text-align: right;
    line-height: 16px;
    margin-top: -8px;
    margin-bottom: -8px;
    color: #666;
}

.chart-body {
    flex: 1;
    min-width: 0;
    display: flex;
    flex-direction: column;
}

.plot, .x-axis {
    display: grid;
    grid-auto-flow: column;
    grid-auto-columns: 1fr;
    padding: 0 6px;
}

/* 10M units tall, gridlines at 10M and 5M */
.plot {
    height: 202px;
    align-items: end;
    background: linear-gradient(#e6e6e6, #e6e6e6) 0 0 / 100% 1px no-repeat,
                linear-gradient(#e6e6e6, #e6e6e6) 0 50% / 100% 1px no-repeat;
    border-bottom: 1px solid #888;
}

.slot {
    height: 201px;
    padding-left: 2px;
    display: flex;
    align-items: flex-end;
}

.bar {
    width: 8px;
}

.bar.people { background: #01b8aa; }
.bar.area { height: 1px; background: #777; }

.x-axis {
    padding: 6px 8px 0 4px;
    color: #555;
}

.x-axis span {
    justify-self: center;
    align-self: start;
    writing-mode: vertical-rl;
    text-orientation: sideways;
    transform: rotate(180deg);
    line-height: 16px;
    white-space: nowrap;
}

.chart-scroll {
    margin-top: auto;
    height: 10px;
    background: #f3f3f3;
}

.chart-scroll i {
    display: block;
    width: 74%;
    height: 10px;
    background: #c6c6c6;
}

/* side panes */
.pane {
    position: relative;
    width: 181px;
    flex: none;
    display: flex;
    flex-direction: column;
    background: #444;
    color: #fff;
    border-left: 1px solid #000;
}

.pane header {
    height: 48px;
    flex: none;
    padding: 0 12px 2px;
    display: flex;
    align-items: center;
    justify-content: space-between;
    background: #212121;
}

.pane h2 {
    font-size: 15px;
}

.viz-grid {
    display: grid;
    grid-template-columns: repeat(6, 28px);
    grid-auto-rows: 24px;
    padding: 2px 0 2px 4px;
}

.viz-grid button {
    display: flex;
    align-items: center;
    justify-content: center;
}

.viz-grid svg {
    width: 19px;
    height: 19px;
}

.viz-grid .selected {
    width: 22px;
    height: 22px;
    margin: 1px 3px;
    background: #2b2b2b;
    border: 2px solid #f2dc4a;
}

.viz-grid .r-script {
    font-size: 21px;
    font-weight: 700;
    line-height: 24px;
    color: #8fb4dd;
}

.pane-tabs {
    height: 36px;
    padding-left: 12px;
    display: flex;
    gap: 4px;
    background: #212121;
}

.pane-tabs button {
    width: 36px;
    display: flex;
    align-items: center;
    justify-content: center;
    border-bottom: 2px solid transparent;
}

.pane-tabs .active {
    border-bottom-color: #f2c811;
}

.wells {
    flex: 1;
    min-height: 0;
    display: flex;
}

.well-list {
    flex: 1;
    min-width: 0;
    padding-left: 4px;
}

.well-list h3 {
    margin: 9px 0 3px 8px;
    font-size: 11px;
    line-height: 20px;
    color: #aaa;
}

.well-list h3:first-child {
    margin-top: 4px;
}

.well {
    padding: 3px 2px 8px;
    display: flex;
    flex-direction: column;
    gap: 2px;
    background: #484848;
    border: 1px dashed #666;
}

.well.empty {
    display: block;
    padding: 0 0 0 9px;
    font-size: 10px;
    line-height: 25px;
    color: #aaa;
    white-space: nowrap;
}

.pill {
    height: 23px;
    padding: 0 3px 0 4px;
    display: flex;
    align-items: center;
    background: #333;
    border: 1px solid #1f1f1f;
    border-radius: 3px;
    font-size: 12px;
}

.pill .caret {
    margin: 0 7px 0 auto;
    border-width: 4px 4px 0;
    border-color: #888 transparent transparent;
}

.remove {
    width: 11px;
    height: 11px;
    background: linear-gradient(45deg, transparent 47%, #999 47%, #999 53%, transparent 53%),
                linear-gradient(-45deg, transparent 47%, #999 47%, #999 53%, transparent 53%);
}

.wells-scroll {
    width: 6px;
}

.wells-scroll i {
    display: block;
    width: 5px;
    height: 61%;
    margin-left: 1px;
    border-radius: 2px;
    background: #777;
}

.filter-head {
    height: 25px;
    padding: 6px 14px 0;
    overflow: hidden;
    background: #212121;
    font-size: 13px;
    line-height: 26px;
}

.tooltip {
    position: absolute;
    left: 107px;
    top: 111px;
    z-index: 2;
    height: 20px;
    padding: 0 4px;
    line-height: 18px;
    white-space: nowrap;
    background: #fff;
    border: 1px solid #888;
    color: #555;
}

.search {
    height: 48px;
    flex: none;
    padding: 7px 9px 10px;
    display: flex;
    border-bottom: 1px solid #000;
}

.search label {
    padding: 6px 0 0 12px;
    background: #212121;
    border: 1px solid #000;
    border-right: none;
}

.search input {
    flex: 1;
    min-width: 0;
    padding-left: 8px;
    background: #212121;
    border: 1px solid #000;
    border-left: none;
    font: inherit;
    font-size: 13px;
    color: #fff;
}

.search input::placeholder {
    color: #aaa;
}

.field-list {
    padding: 2px 7px 0 5px;
    font-size: 12px;
}

.table-row {
    height: 33px;
    padding-left: 5px;
    display: flex;
    align-items: center;
    color: #f2c811;
}

.table-row svg {
    margin: 0 12px 0 10px;
}

.expander {
    border-left: 5px solid transparent;
    border-bottom: 5px solid #999;
}

.field {
    height: 20px;
    padding-left: 26px;
    display: flex;
    align-items: center;
    background: #666;
    border-radius: 2px;
}

.field + .field {
    margin-top: 2px;
}

.field input {
    appearance: none;
    position: relative;
    width: 12px;
    height: 12px;
    background: #fff;
    border: 2px solid #ccc;
}

.field input:checked {
    background: #f2c811;
    border-color: #f2c811;
}

.field input:checked::after {
    content: "";
    position: absolute;
    left: 2px;
    top: -1px;
    width: 4px;
    height: 8px;
    border: solid #222;
    border-width: 0 2px 2px 0;
    transform: rotate(45deg);
}

.sigma {
    width: 21px;
    padding-left: 5px;
    font-style: normal;
    color: #aaa;
}

/* status bar and taskbar */
.status {
    height: 22px;
    flex: none;
    padding-left: 5px;
    line-height: 20px;
    background: #333;
    color: #fff;
}

.taskbar {
    height: 8px;
    flex: none;
    display: flex;
    justify-content: space-between;
    background: #000306;
}
```
FILE: script.js
```js
// population by prefecture, in millions
const prefectures = [
    ['愛知県', 7.47], ['愛媛県', 1.39], ['茨城県', 2.9], ['岡山県', 1.93], ['沖縄県', 1.43],
    ['岩手県', 1.28], ['岐阜県', 2.03], ['宮崎県', 1.1], ['宮城県', 2.33], ['京都府', 2.61],
    ['熊本県', 1.79], ['群馬県', 1.97], ['広島県', 2.84], ['香川県', 0.98], ['高知県', 0.73],
    ['佐賀県', 0.83], ['埼玉県', 7.25], ['三重県', 1.82], ['山形県', 1.12], ['山口県', 1.4],
    ['山梨県', 0.84], ['滋賀県', 1.41], ['鹿児島県', 1.65], ['秋田県', 1.02], ['新潟県', 2.3],
    ['神奈川県', 9.1], ['青森県', 1.31], ['静岡県', 3.7], ['石川県', 1.15], ['千葉県', 6.2],
    ['大阪府', 8.84], ['大分県', 1.17], ['長崎県', 1.38], ['長野県', 2.1], ['鳥取県', 0.57]
];

const plot = document.getElementById('plot');
const xAxis = document.getElementById('xAxis');

prefectures.forEach(([name, people]) => {
    const slot = document.createElement('div');
    slot.className = 'slot';
    slot.innerHTML = '<i class="bar people"></i><i class="bar area"></i>';
    slot.firstChild.style.height = people * 10 + '%';
    plot.appendChild(slot);

    const label = document.createElement('span');
    label.textContent = name;
    xAxis.appendChild(label);
});
```
